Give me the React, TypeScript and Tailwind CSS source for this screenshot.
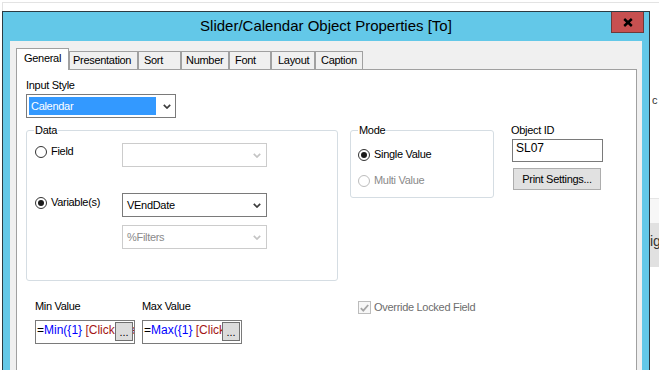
import React from 'react';

const Chevron = ({ color }: { color: string }) => (
  <svg width="8" height="5" viewBox="0 0 8 5" className="shrink-0">
    <path d="M0.8 0.8 L4 4 L7.2 0.8" fill="none" stroke={color} strokeWidth="1.7" />
  </svg>
);

const ComboBox = ({ value, disabled = false }: { value?: string; disabled?: boolean }) => (
  <div
    className={`flex h-[24px] w-[145px] items-center justify-between border bg-white pl-[4px] pr-[5px] leading-[13px] ${
      disabled ? 'border-[#cccccc] text-[#8a8a8a]' : 'border-[#7a7a7a] text-black'
    }`}
  >
    <span>{value}</span>
    <Chevron color={disabled ? '#c4c4c4' : '#3c3c3c'} />
  </div>
);

const Radio = ({ checked = false, disabled = false, className = '' }: { checked?: boolean; disabled?: boolean; className?: string }) => (
  <span
    className={`flex h-[12px] w-[12px] shrink-0 items-center justify-center rounded-full border bg-white ${
      disabled ? 'border-[#bcbcbc]' : 'border-[#333333]'
    } ${className}`}
  >
    {checked && <span className="h-[6px] w-[6px] rounded-full bg-[#1a1a1a]" />}
  </span>
);

const ValueBox = ({ fn }: { fn: string }) => (
  <div className="relative mt-[7px] h-[24px] w-[100px] overflow-hidden whitespace-nowrap border border-[#7a7a7a] bg-white pl-[1px] pt-[2px] text-[12px] leading-[14px] tracking-normal">
    <span>=</span>
    <span className="text-[#0000ff]">{fn}({'{'}1{'}'}</span>
    <span className="text-[#a31515]"> [Click to edit]</span>
    {/* edit button sits over the expression text */}
    <div className="absolute left-[79px] top-[1px] flex h-[19px] w-[18px] items-end justify-center border border-[#707070] bg-[#dcdcdc] pb-[2px] text-[11px] leading-[11px] text-black">
      ...
    </div>
  </div>
);

const tabs = [
  { label: 'Presentation', cls: 'w-[69px] pl-[3px]' },
  { label: 'Sort', cls: 'w-[43px] pl-[5px]' },
  { label: 'Number', cls: 'w-[48px] pl-[4px]' },
  { label: 'Font', cls: 'w-[42px] pl-[5px]' },
  { label: 'Layout', cls: 'w-[44px] pl-[6px]' },
  { label: 'Caption', cls: 'w-[48px] pl-[5px]' },
];

export default function App() {
  return (
    <div className="h-[370px] w-[659px] overflow-hidden bg-white font-['Liberation_Sans',Arial,sans-serif] text-[11px] tracking-[-0.3px] text-black">
      {/* window behind the dialog */}
      <div className="ml-[2px] mt-[2px] h-[9px] border-l border-t border-[#e3e3e3]" />

      <div className="ml-[2px] flex">
        {/* Dialog */}
        <div className="flex h-[359px] w-[648px] shrink-0 flex-col border border-b-0 border-[#2b3a42] bg-[#63c8e8]">
          {/* Title bar */}
          <div className="grid h-[29px] shrink-0 grid-cols-[1fr_auto_1fr]">
            <div />
            <div className="pt-[5px] text-[15px] leading-[18px] tracking-normal text-black">
              Slider/Calendar Object Properties [To]
            </div>
            <div className="flex justify-end">
              <div className="mr-[5px] flex h-[21px] w-[33px] items-center justify-center border border-t-0 border-[#6d3a3a] bg-[#c75050]">
                <svg width="10" height="9" viewBox="0 0 10 9">
                  <path d="M1.2 1 L8.8 8 M8.8 1 L1.2 8" stroke="#000" strokeWidth="2.4" />
                </svg>
              </div>
            </div>
          </div>

          {/* Client area */}
          <div className="mx-[7px] flex flex-1 flex-col bg-[#f0f0f0] pl-[6px] pr-[5px]">
            {/* Tabs */}
            <div className="flex h-[28px] shrink-0 items-end">
              <div className="relative z-10 -mb-px flex h-[22px] w-[53px] border border-b-0 border-[#a0a0a0] bg-white pl-[7px] pt-[3px] leading-[13px]">
                General
              </div>
              {tabs.map((t) => (
                <div
                  key={t.label}
                  className={`flex h-[18px] shrink-0 border border-b-0 border-[#a0a0a0] bg-[#f0f0f0] pt-[2px] leading-[13px] ${t.cls}`}
                >
                  {t.label}
                </div>
              ))}
            </div>

            {/* Tab page */}
            <div className="flex flex-1 flex-col border border-b-0 border-[#a0a0a0] bg-white pl-[9px] pt-[9px]">
              <div className="leading-[13px]">Input Style</div>
              <div className="mt-[2px] flex h-[24px] w-[150px] items-center border border-[#7a7a7a] bg-white pl-[2px]">
                <div className="flex h-[18px] w-[127px] items-center bg-[#3399ff] pl-[2px] leading-[13px] text-white">
                  Calendar
                </div>
                <div className="ml-[7px]">
                  <Chevron color="#3c3c3c" />
                </div>
              </div>

              <div className="mt-[6px] flex items-start">
                {/* Data group */}
                <div className="relative mt-[6px] h-[151px] w-[312px] shrink-0 rounded-[3px] border border-[#d5dde3]">
                  <span className="absolute -top-[7px] left-[7px] bg-white px-[1px] leading-[13px]">Data</span>

                  <div className="mt-[12px] flex">
                    <div className="flex w-[95px] items-start pl-[8px]">
                      <Radio className="mt-[3px]" />
                      <span className="ml-[4px] mt-[2px] leading-[13px]">Field</span>
                    </div>
                    <ComboBox disabled />
                  </div>

                  <div className="mt-[26px] flex">
                    <div className="flex w-[95px] items-start pl-[8px]">
                      <Radio checked className="mt-[4px]" />
                      <span className="ml-[4px] mt-[3px] leading-[13px]">Variable(s)</span>
                    </div>
                    <ComboBox value="VEndDate" />
                  </div>

                  <div className="mt-[8px] pl-[95px]">
                    <ComboBox value="%Filters" disabled />
                  </div>
                </div>

                {/* Mode group */}
                <div className="relative ml-[12px] mt-[6px] h-[68px] w-[144px] shrink-0 rounded-[3px] border border-[#d5dde3]">
                  <span className="absolute -top-[7px] left-[7px] bg-white px-[1px] leading-[13px]">Mode</span>
                  <div className="ml-[7px] mt-[17px] flex items-center">
                    <Radio checked />
                    <span className="ml-[4px] leading-[13px]">Single Value</span>
                  </div>
                  <div className="ml-[7px] mt-[13px] flex items-center">
                    <Radio disabled />
                    <span className="ml-[4px] leading-[13px] text-[#8a8a8a]">Multi Value</span>
                  </div>
                </div>

                {/* Object ID */}
                <div className="ml-[17px] flex flex-col">
                  <div className="leading-[13px]">Object ID</div>
                  <div className="ml-[1px] mt-[2px] h-[23px] w-[91px] border border-[#7a7a7a] bg-white pl-[3px] pt-px text-[12px] leading-[14px] tracking-normal">
                    SL07
                  </div>
                  <div className="ml-[2px] mt-[6px] flex h-[22px] w-[88px] items-center justify-center border border-[#adadad] bg-[#e1e1e1] leading-[13px]">
                    Print Settings...
                  </div>
                </div>
              </div>

              {/* Min / Max / Override */}
              <div className="mt-[19px] flex items-start">
                <div className="ml-[9px] flex flex-col">
                  <div className="leading-[13px]">Min Value</div>
                  <ValueBox fn="Min" />
                </div>
                <div className="ml-[7px] flex flex-col">
                  <div className="leading-[13px]">Max Value</div>
                  <ValueBox fn="Max" />
                </div>
                <div className="ml-[116px] mt-px flex items-center">
                  <span className="flex h-[13px] w-[13px] items-center justify-center border border-[#bcbcbc] bg-[#f7f7f7]">
                    <svg width="9" height="8" viewBox="0 0 9 8">
                      <path d="M0.8 4.2 L3.3 6.6 L8.2 1" fill="none" stroke="#a5a5a5" strokeWidth="1.8" />
                    </svg>
                  </span>
                  <span className="ml-[3px] leading-[13px] text-[#6d6d6d]">Override Locked Field</span>
                </div>
              </div>
            </div>
          </div>
        </div>

        {/* what shows of the page behind, right of the dialog */}
        <div className="h-[359px] flex-1 overflow-hidden">
          <div className="mt-[83px] pl-[2px] leading-[13px] text-[#333333]">c</div>
          <div className="mt-[91px] h-[25px] border-t border-[#e5e5e5] bg-[#f7f7f7]" />
          <div className="h-[44px] bg-[#e1e1e1] pt-[10px] text-[14px] leading-[16px] tracking-normal text-[#333333]">ig</div>
        </div>
      </div>
    </div>
  );
}
